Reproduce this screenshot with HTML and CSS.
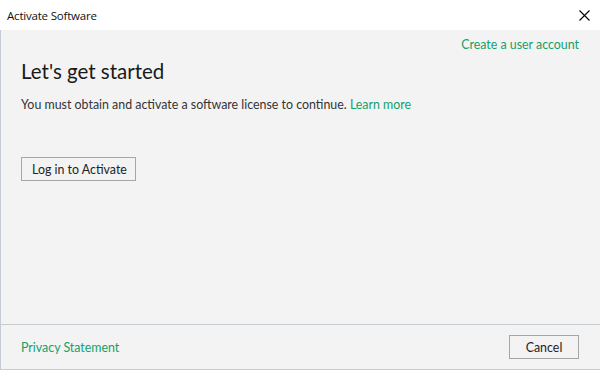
FILE: index.html
```html
<!DOCTYPE html>
<html lang="en">
<head>
  <meta charset="UTF-8">
  <title>Activate Software</title>
  <link rel="stylesheet" href="styles.css">
</head>
<body>
  <div class="window">
    <header class="titlebar">
      <span class="title">Activate Software</span>
      <button class="close" aria-label="Close">
        <svg width="11" height="11" viewBox="0 0 11 11"><path d="M0.5 0.5 L10.5 10.5 M10.5 0.5 L0.5 10.5" stroke="#000" stroke-width="1.1"/></svg>
      </button>
    </header>

    <main class="content">
      <div class="top-links">
        <a href="#" class="link">Create a user account</a>
      </div>
      <h1 class="heading">Let's get started</h1>
      <p class="lead">You must obtain and activate a software license to continue. <a href="#" class="link">Learn more</a></p>
      <button class="btn btn-login">Log in to Activate</button>
    </main>

    <footer class="footer">
      <a href="#" class="link">Privacy Statement</a>
      <button class="btn btn-cancel">Cancel</button>
    </footer>
  </div>
</body>
</html>
```

FILE: styles.css
```css
html, body {
  margin: 0;
  padding: 0;
}

body {
  font-family: 'Lato', 'Noto Sans', sans-serif;
  color: #222;
  background: #f3f3f3;
}

.window {
  width: 600px;
  height: 370px;
  display: flex;
  flex-direction: column;
  box-sizing: border-box;
}

.titlebar {
  height: 30px;
  flex: none;
  background: #fff;
  display: flex;
  align-items: center;
  justify-content: space-between;
  padding-left: 7px;
}

.title {
  font-family: 'Open Sans', sans-serif;
  font-size: 11.5px;
  color: #111;
  letter-spacing: -0.2px;
}

.close {
  width: 32px;
  height: 30px;
  border: 0;
  background: none;
  padding: 0;
  display: flex;
  align-items: center;
  justify-content: center;
}

.content {
  flex: 1;
  border-left: 1px solid #c6ccd4;
  padding: 0 20px;
  display: flex;
  flex-direction: column;
  align-items: flex-start;
}

.top-links {
  align-self: stretch;
  display: flex;
  justify-content: flex-end;
  padding-top: 7px;
  padding-right: 1px;
}

.link {
  color: #14a06a;
  text-decoration: none;
  font-size: 12.4px;
}

.heading {
  font-size: 20.5px;
  font-weight: 400;
  margin: 7px 0 0;
  color: #1a1a1a;
}

.lead {
  font-size: 12.4px;
  color: #333;
  margin: 14px 0 0;
}

.btn {
  font-family: inherit;
  font-size: 12.4px;
  color: #222;
  background: #f3f3f3;
  border: 1px solid #a6a6a6;
  height: 24px;
  padding: 0 10px;
  white-space: nowrap;
}

.btn-login {
  margin-top: 45px;
  width: 115px;
}

.footer {
  height: 44px;
  flex: none;
  border-top: 1px solid #c6ccd4;
  border-left: 1px solid #c6ccd4;
  border-bottom: 1px solid #c6ccd4;
  display: flex;
  align-items: center;
  justify-content: space-between;
  padding: 0 21px 0 20px;
}

.btn-cancel {
  width: 70px;
}
```
